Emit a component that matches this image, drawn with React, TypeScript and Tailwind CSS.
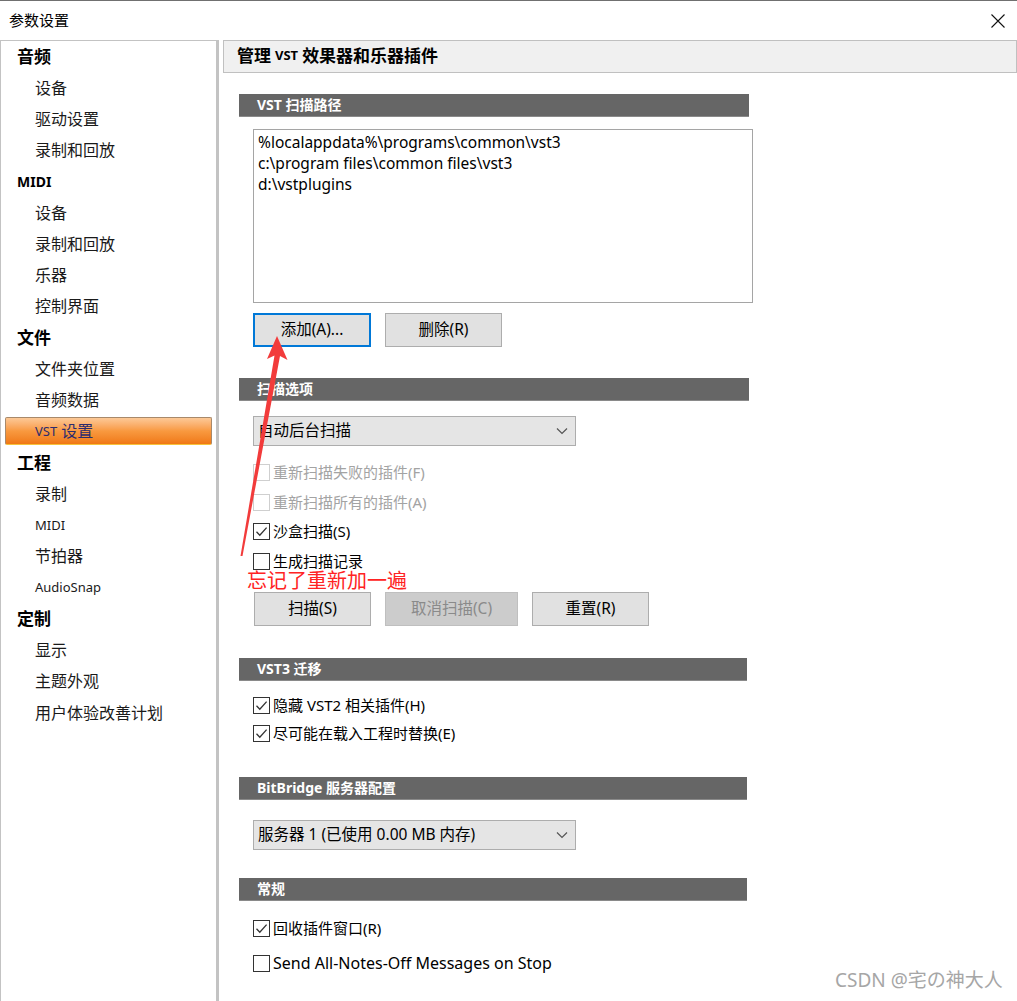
import clsx from 'clsx'

type NavItem = { label: string; head?: boolean; small?: boolean; active?: boolean }

const navItems: NavItem[] = [
  { label: '音频', head: true },
  { label: '设备' },
  { label: '驱动设置' },
  { label: '录制和回放' },
  { label: 'MIDI', head: true, small: true },
  { label: '设备' },
  { label: '录制和回放' },
  { label: '乐器' },
  { label: '控制界面' },
  { label: '文件', head: true },
  { label: '文件夹位置' },
  { label: '音频数据' },
  { label: 'VST 设置', active: true },
  { label: '工程', head: true },
  { label: '录制' },
  { label: 'MIDI', small: true },
  { label: '节拍器' },
  { label: 'AudioSnap', small: true },
  { label: '定制', head: true },
  { label: '显示' },
  { label: '主题外观' },
  { label: '用户体验改善计划' },
]

function SectionBar({ title, wide }: { title: string; wide?: boolean }) {
  return (
    <div
      className={clsx(
        'h-[23px] bg-[#666666] border-b border-[#8a8a8a] flex items-center pl-[18px] text-white font-bold text-[14px]',
        wide ? 'w-[510px]' : 'w-[508px]'
      )}
    >
      {title}
    </div>
  )
}

function CheckBox({ checked, disabled }: { checked?: boolean; disabled?: boolean }) {
  return (
    <span
      className={clsx(
        'w-[17px] h-[17px] border bg-white flex items-center justify-center shrink-0',
        disabled ? 'border-[#cfcfcf]' : 'border-[#333333]'
      )}
    >
      {checked && (
        <svg width="13" height="13" viewBox="0 0 13 13">
          <path d="M1.5 6.8 L4.8 10.2 L11.6 2.6" fill="none" stroke="#333" strokeWidth="1.3" />
        </svg>
      )}
    </span>
  )
}

function CheckRow({
  label,
  checked,
  disabled,
  h,
  size = 'text-[15px]',
}: {
  label: string
  checked?: boolean
  disabled?: boolean
  h: string
  size?: string
}) {
  return (
    <div className={clsx('flex items-center gap-[3px]', size, h)}>
      <CheckBox checked={checked} disabled={disabled} />
      <span className={disabled ? 'text-[#a3a3a3]' : 'text-black'}>{label}</span>
    </div>
  )
}

function Btn({
  label,
  w,
  focused,
  disabled,
}: {
  label: string
  w: string
  focused?: boolean
  disabled?: boolean
}) {
  return (
    <div
      className={clsx(
        'h-[34px] flex items-center justify-center text-[15.5px]',
        w,
        focused && 'border-2 border-[#0078d7] bg-[#e1e1e1] text-black',
        !focused && !disabled && 'border border-[#adadad] bg-[#e1e1e1] text-black',
        disabled && 'border border-[#bfbfbf] bg-[#cccccc] text-[#8a8a8a]'
      )}
    >
      {label}
    </div>
  )
}

function Select({ label }: { label: string }) {
  return (
    <div className="ml-[14px] w-[323px] h-[30px] bg-[#e5e5e5] border border-[#adadad] flex items-center justify-between pl-[4px] pr-[7px] text-[15.5px] text-black">
      <span>{label}</span>
      <svg width="12" height="8" viewBox="0 0 12 8">
        <path d="M1 1.5 L6 6.5 L11 1.5" fill="none" stroke="#555" strokeWidth="1.2" />
      </svg>
    </div>
  )
}

export default function App() {
  return (
    <div className="relative w-[1017px] h-[1001px] bg-white overflow-hidden font-['Noto_Sans','Noto_Sans_CJK_SC',sans-serif] leading-none text-black">
      {/* title bar */}
      <div className="h-[40px] border-t border-[#707070] flex items-center justify-between pl-[9px] pr-[12px]">
        <span className="text-[15px]">参数设置</span>
        <svg width="14" height="14" viewBox="0 0 14 14">
          <path d="M0.5 0.5 L13.5 13.5 M13.5 0.5 L0.5 13.5" stroke="#111" strokeWidth="1.1" />
        </svg>
      </div>

      <div className="flex h-[961px]">
        {/* sidebar */}
        <div className="w-[219px] shrink-0 border-l border-t border-r-[3px] border-[#c3c3c3]">
          {navItems.map((item, i) => (
            <div key={i} className="h-[31.24px] flex items-center">
              {item.active ? (
                <div className="mx-[4px] w-[207px] h-[28px] flex items-center pl-[29px] rounded-[2px] border border-[#a8896a] border-b-[#f7c23a] bg-gradient-to-b from-[#fcc896] via-[#f8993f] to-[#f07812] text-[#2c2c6e]">
                  <span className="text-[13px]">VST</span>
                  <span className="text-[16px] ml-[4px]">设置</span>
                </div>
              ) : item.head ? (
                <span className={clsx('pl-[16px] font-bold', item.small ? 'text-[14px]' : 'text-[17px]')}>
                  {item.label}
                </span>
              ) : (
                <span className={clsx('pl-[34px] text-[#1a1a1a]', item.small ? 'text-[13px]' : 'text-[16px]')}>
                  {item.label}
                </span>
              )}
            </div>
          ))}
        </div>

        {/* content */}
        <div className="flex-1 pl-[4px]">
          <div className="h-[33px] bg-[#f0f0f0] border border-[#c0c0c0] flex items-center pl-[13px] pb-[2px] font-bold text-[17px]">
            <span>管理</span>
            <span className="text-[13px] mx-[4px]">VST</span>
            <span>效果器和乐器插件</span>
          </div>

          <div className="pl-[16px] flex flex-col">
            <div className="mt-[21px]">
              <SectionBar title="VST 扫描路径" wide />
            </div>
            <div className="mt-[12px] ml-[14px] w-[500px] h-[174px] border border-[#a5a5a5] px-[4px] pt-[2px] text-[15.5px] leading-[21px]">
              <div>%localappdata%\programs\common\vst3</div>
              <div>c:\program files\common files\vst3</div>
              <div>d:\vstplugins</div>
            </div>
            <div className="mt-[10px] ml-[14px] flex gap-[14px]">
              <Btn label="添加(A)..." w="w-[118px]" focused />
              <Btn label="删除(R)" w="w-[117px]" />
            </div>

            <div className="mt-[31px]">
              <SectionBar title="扫描选项" wide />
            </div>
            <div className="mt-[15px]">
              <Select label="自动后台扫描" />
            </div>
            <div className="mt-[12px] ml-[14px] flex flex-col">
              <CheckRow label="重新扫描失败的插件(F)" disabled h="h-[29.5px]" />
              <CheckRow label="重新扫描所有的插件(A)" disabled h="h-[29.5px]" />
              <CheckRow label="沙盒扫描(S)" checked h="h-[29.5px]" />
              <CheckRow label="生成扫描记录" h="h-[29.5px]" />
            </div>
            <div className="mt-[16px] ml-[15px] flex gap-[14px]">
              <Btn label="扫描(S)" w="w-[117px]" />
              <Btn label="取消扫描(C)" w="w-[133px]" disabled />
              <Btn label="重置(R)" w="w-[117px]" />
            </div>

            <div className="mt-[32px]">
              <SectionBar title="VST3 迁移" />
            </div>
            <div className="mt-[10px] ml-[14px] flex flex-col">
              <CheckRow label="隐藏 VST2 相关插件(H)" checked h="h-[28px]" />
              <CheckRow label="尽可能在载入工程时替换(E)" checked h="h-[28px]" />
            </div>

            <div className="mt-[30px]">
              <SectionBar title="BitBridge 服务器配置" />
            </div>
            <div className="mt-[20px]">
              <Select label="服务器 1 (已使用 0.00 MB 内存)" />
            </div>

            <div className="mt-[28px]">
              <SectionBar title="常规" />
            </div>
            <div className="mt-[12px] ml-[14px] flex flex-col gap-[5px]">
              <CheckRow label="回收插件窗口(R)" checked h="h-[30px]" />
              <CheckRow label="Send All-Notes-Off Messages on Stop" h="h-[30px]" size="text-[16px]" />
            </div>
          </div>
        </div>
      </div>

      {/* annotation overlay */}
      <svg className="absolute left-0 top-0 pointer-events-none" width="1017" height="1001">
        <polygon
          points="277,336 267,359 274.5,355.5 240.5,556 242.5,556 280,356 287.5,360"
          fill="#f23b3b"
        />
      </svg>
      <div className="absolute left-[247px] top-[571px] text-[20px] text-[#ff2323]">忘记了重新加一遍</div>

      <div className="absolute left-[835px] top-[971px] text-[19px] text-[#a6a6a6]">CSDN @宅の神大人</div>
    </div>
  )
}
